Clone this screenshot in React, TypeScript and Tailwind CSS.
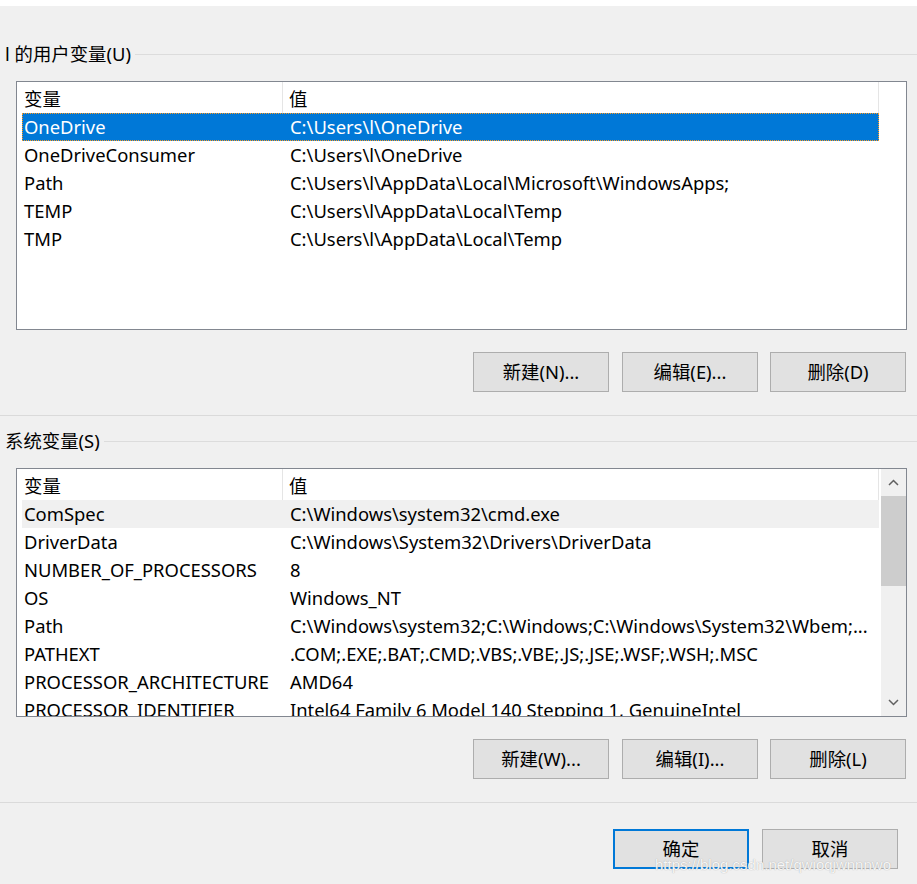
import React from "react";

type Row = { name: string; value: string };

const userRows: Row[] = [
  { name: "OneDrive", value: "C:\\Users\\l\\OneDrive" },
  { name: "OneDriveConsumer", value: "C:\\Users\\l\\OneDrive" },
  { name: "Path", value: "C:\\Users\\l\\AppData\\Local\\Microsoft\\WindowsApps;" },
  { name: "TEMP", value: "C:\\Users\\l\\AppData\\Local\\Temp" },
  { name: "TMP", value: "C:\\Users\\l\\AppData\\Local\\Temp" },
];

const systemRows: Row[] = [
  { name: "ComSpec", value: "C:\\Windows\\system32\\cmd.exe" },
  { name: "DriverData", value: "C:\\Windows\\System32\\Drivers\\DriverData" },
  { name: "NUMBER_OF_PROCESSORS", value: "8" },
  { name: "OS", value: "Windows_NT" },
  { name: "Path", value: "C:\\Windows\\system32;C:\\Windows;C:\\Windows\\System32\\Wbem;..." },
  { name: "PATHEXT", value: ".COM;.EXE;.BAT;.CMD;.VBS;.VBE;.JS;.JSE;.WSF;.WSH;.MSC" },
  { name: "PROCESSOR_ARCHITECTURE", value: "AMD64" },
  { name: "PROCESSOR_IDENTIFIER", value: "Intel64 Family 6 Model 140 Stepping 1, GenuineIntel" },
];

function GroupLabel({ text }: { text: string }) {
  return (
    <div className="flex items-center h-[24px] pl-[5px]">
      <span className="leading-[24px] whitespace-nowrap">{text}</span>
      <div className="flex-1 h-px bg-[#dcdcdc] ml-[4px]" />
    </div>
  );
}

function ListBox({
  rows,
  selected,
  hovered,
  scrollbar,
}: {
  rows: Row[];
  selected?: number;
  hovered?: number;
  scrollbar?: boolean;
}) {
  return (
    <div className="ml-[16px] mr-[10px] h-[249px] bg-white border border-[#828790] flex overflow-hidden">
      <div className="flex-1 min-w-0 overflow-hidden">
        {/* column headers */}
        <div className="flex h-[31px] w-[862px] border-r border-[#e5e5e5]">
          <div className="w-[266px] border-r border-[#e5e5e5] pl-[7px] pt-[2px] leading-[29px]">变量</div>
          <div className="flex-1 pl-[6px] pt-[2px] leading-[29px]">值</div>
        </div>
        {rows.map((r, i) => {
          const sel = i === selected;
          const hov = i === hovered;
          return (
            <div
              key={r.name}
              className={
                "flex h-[28px] ml-[5px] w-[857px] whitespace-nowrap " +
                (sel
                  ? "bg-[#0078d7] text-white outline outline-1 outline-dotted outline-[#ff9a1f] -outline-offset-1"
                  : hov
                  ? "bg-[#f0f0f0]"
                  : "")
              }
            >
              <div className="w-[261px] pl-[2px] leading-[28px] overflow-hidden">{r.name}</div>
              <div className="flex-1 pl-[7px] leading-[28px] overflow-hidden">{r.value}</div>
            </div>
          );
        })}
      </div>
      {scrollbar && (
        <div className="w-[25px] bg-[#f0f0f0] flex flex-col">
          <div className="h-[27px] flex items-center justify-center">
            <svg width="11" height="7" viewBox="0 0 11 7">
              <polyline points="1,6 5.5,1.5 10,6" fill="none" stroke="#606060" strokeWidth="1.5" />
            </svg>
          </div>
          <div className="h-[90px] bg-[#cdcdcd]" />
          <div className="flex-1" />
          <div className="h-[27px] flex items-center justify-center">
            <svg width="11" height="7" viewBox="0 0 11 7">
              <polyline points="1,1 5.5,5.5 10,1" fill="none" stroke="#606060" strokeWidth="1.5" />
            </svg>
          </div>
        </div>
      )}
    </div>
  );
}

function Btn({ label, primary, className = "" }: { label: string; primary?: boolean; className?: string }) {
  return (
    <button
      className={
        "w-[136px] h-[40px] bg-[#e1e1e1] text-black leading-none " +
        (primary ? "border-2 border-[#0078d7] " : "border border-[#adadad] ") +
        className
      }
    >
      {label}
    </button>
  );
}

export default function App() {
  return (
    <div
      className="relative w-[917px] h-[884px] bg-[#f0f0f0] overflow-hidden text-[18.4px] text-black"
      style={{ fontFamily: '"Noto Sans", "Noto Sans CJK SC", sans-serif' }}
    >
      <div className="h-[6px] bg-white" />

      {/* 用户变量 */}
      <div className="mt-[36px]">
        <GroupLabel text="l 的用户变量(U)" />
      </div>
      <div className="mt-[15px]">
        <ListBox rows={userRows} selected={0} />
      </div>
      <div className="mt-[22px] flex justify-end pr-[11px]">
        <Btn label="新建(N)..." />
        <Btn label="编辑(E)..." className="ml-[13px]" />
        <Btn label="删除(D)" className="ml-[12px]" />
      </div>

      <div className="mt-[23px] h-px bg-[#dadada]" />

      {/* 系统变量 */}
      <div className="mt-[13px]">
        <GroupLabel text="系统变量(S)" />
      </div>
      <div className="mt-[15px]">
        <ListBox rows={systemRows} hovered={0} scrollbar />
      </div>
      <div className="mt-[22px] flex justify-end pr-[11px]">
        <Btn label="新建(W)..." />
        <Btn label="编辑(I)..." className="ml-[13px]" />
        <Btn label="删除(L)" className="ml-[12px]" />
      </div>

      <div className="mt-[23px] h-px bg-[#dadada]" />

      <div className="mt-[26px] flex justify-end pr-[19px]">
        <Btn label="确定" primary />
        <Btn label="取消" className="ml-[13px]" />
      </div>

      {/* watermark */}
      <div
        className="absolute left-[655px] top-[856px] text-[15px] leading-[18px] text-white/90 whitespace-nowrap"
        style={{ fontFamily: '"Liberation Sans", Arial, sans-serif', textShadow: "0 0 1px #999" }}
      >
        https://blog.csdn.net/qwioqjwnnnwo
      </div>
    </div>
  );
}
